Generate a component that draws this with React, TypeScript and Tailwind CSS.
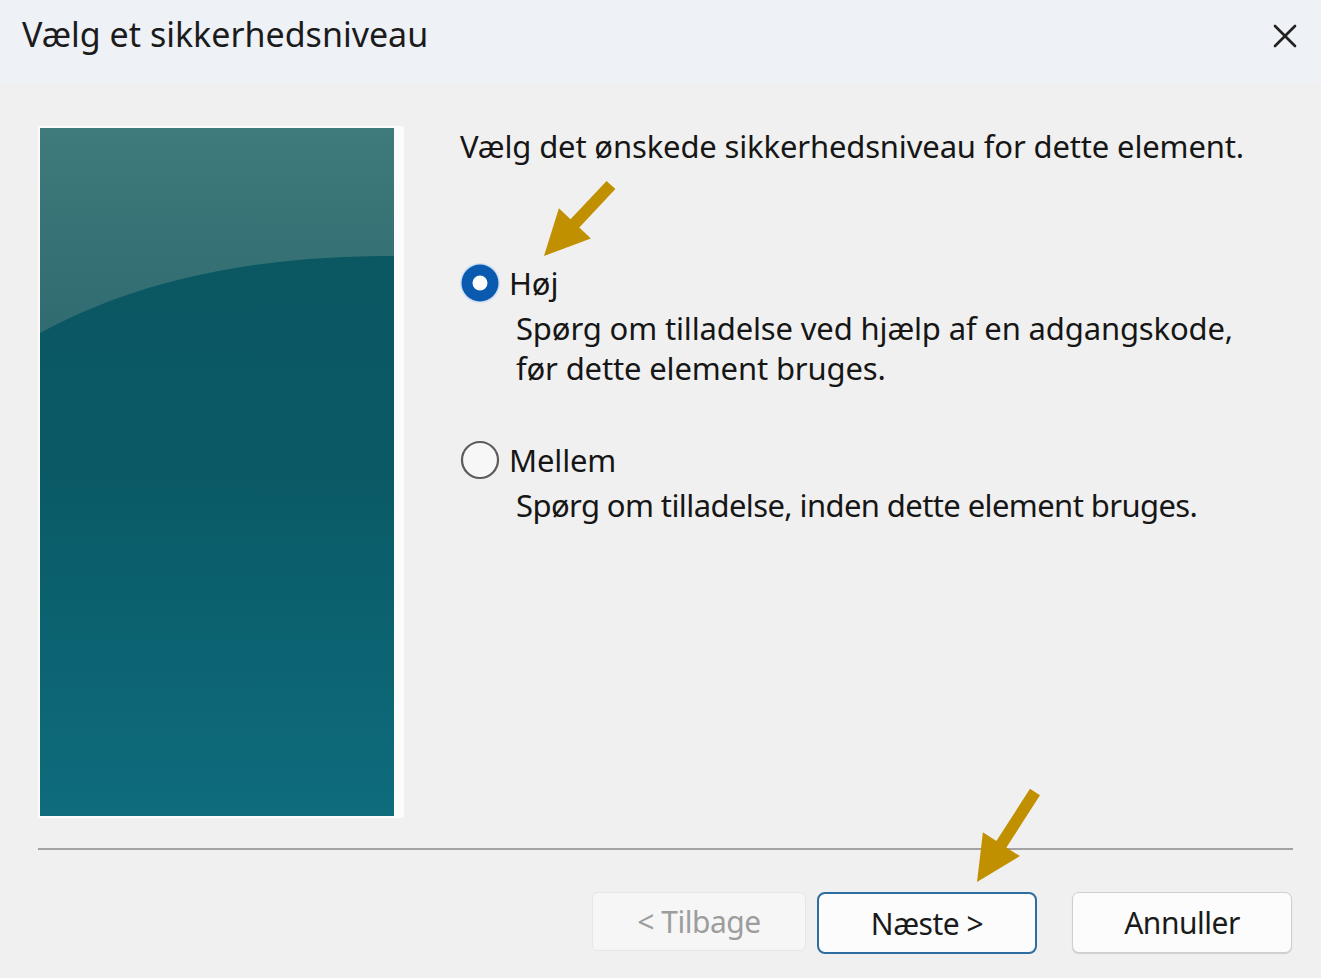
import { X } from 'lucide-react';

const font = { fontFamily: '"Noto Sans", "Liberation Sans", sans-serif' };

const Arrows = () => (
  <svg className="pointer-events-none absolute left-0 top-0" width={1321} height={978} viewBox="0 0 1321 978">
    <polygon
      fill="#c09000"
      points="544,256 590.9,238.4 579.3,227.4 615.4,189.1 606.6,180.9 570.5,219.2 558.9,208.2"
    />
    <polygon
      fill="#c09000"
      points="977,882 1019.9,856.1 1006.4,847.5 1040,795.3 1030,788.7 996.4,841 982.9,832.3"
    />
  </svg>
);

const Radio = ({ checked }: { checked: boolean }) =>
  checked ? (
    <svg width={42} height={42} viewBox="0 0 42 42">
      <circle cx={21} cy={21} r={20} fill="#cfe0f3" />
      <circle cx={21} cy={21} r={18.5} fill="#0a5bb0" />
      <circle cx={21} cy={21} r={7.5} fill="#ffffff" />
    </svg>
  ) : (
    <svg width={42} height={42} viewBox="0 0 42 42">
      <circle cx={21} cy={21} r={18} fill="#f7f7f7" stroke="#5c5c5c" strokeWidth={2.2} />
    </svg>
  );

export default function App() {
  return (
    <div className="relative flex h-[978px] w-[1321px] flex-col overflow-hidden bg-[#f0f0f0] text-[#161616]" style={font}>
      {/* title bar */}
      <div className="flex h-[83px] items-start justify-between bg-[#eef1f5] pl-[22px] pr-[16px]">
        <div className="mt-[12px] text-[34px] leading-[44px] text-[#1b1b1b]">Vælg et sikkerhedsniveau</div>
        <X className="mt-[16px] h-[40px] w-[40px] text-[#222]" strokeWidth={1.6} />
      </div>

      {/* body */}
      <div className="flex flex-1 flex-col px-[38px] pt-[43px]">
        <div className="flex">
          <div className="bg-[#fbfbfb] pb-[2px] pl-[2px] pr-[10px] pt-[2px]">
            <div className="relative h-[688px] w-[354px] overflow-hidden bg-gradient-to-b from-[#0b5560] via-[#0a5a66] to-[#0e6c7c]">
              <svg className="absolute left-0 top-0" width={354} height={220} viewBox="0 0 354 220">
                <defs>
                  <linearGradient id="gl" x1="0" y1="0" x2="0" y2="1">
                    <stop offset="0" stopColor="#3f7b7c" />
                    <stop offset="1" stopColor="#2f6b70" />
                  </linearGradient>
                </defs>
                <path d="M0 0 H354 V128 C250 128 120 140 0 205 Z" fill="url(#gl)" />
              </svg>
            </div>
          </div>

          <div className="ml-[56px] flex flex-col text-[31px] leading-[40px] tracking-[-0.15px]">
            <div>Vælg det ønskede sikkerhedsniveau for dette element.</div>

            <div className="-ml-[1px] mt-[96px] flex items-center gap-[8px]">
              <Radio checked />
              <span>Høj</span>
            </div>
            <div className="ml-[56px] mt-[4px]">
              Spørg om tilladelse ved hjælp af en adgangskode,
              <br />
              før dette element bruges.
            </div>

            <div className="-ml-[1px] mt-[51px] flex items-center gap-[8px]">
              <Radio checked={false} />
              <span>Mellem</span>
            </div>
            <div className="ml-[56px] mt-[4px] tracking-[-0.6px]">Spørg om tilladelse, inden dette element bruges.</div>
          </div>
        </div>

        <div className="mt-[30px] h-[2px] w-[1255px] bg-[#a3a3a3]" />

        <div className="-mr-[9px] mt-[42px] flex justify-end gap-[10px] text-[30px] tracking-[-0.5px]">
          <button className="h-[59px] w-[214px] rounded-[6px] border border-[#e6e6e6] bg-[#f6f6f6] text-[#9d9d9d]">
            &lt; Tilbage
          </button>
          <button className="ml-[1px] h-[62px] w-[220px] rounded-[8px] border-2 border-[#2d6d9f] bg-[#fcfcfc] text-[#1a1a1a]">
            Næste &gt;
          </button>
          <button className="ml-[25px] h-[61px] w-[220px] rounded-[7px] border border-[#cfcfcf] bg-[#fcfcfc] text-[#1a1a1a] shadow-[0_1px_1px_rgba(0,0,0,0.15)]">
            Annuller
          </button>
        </div>
      </div>

      <Arrows />
    </div>
  );
}
